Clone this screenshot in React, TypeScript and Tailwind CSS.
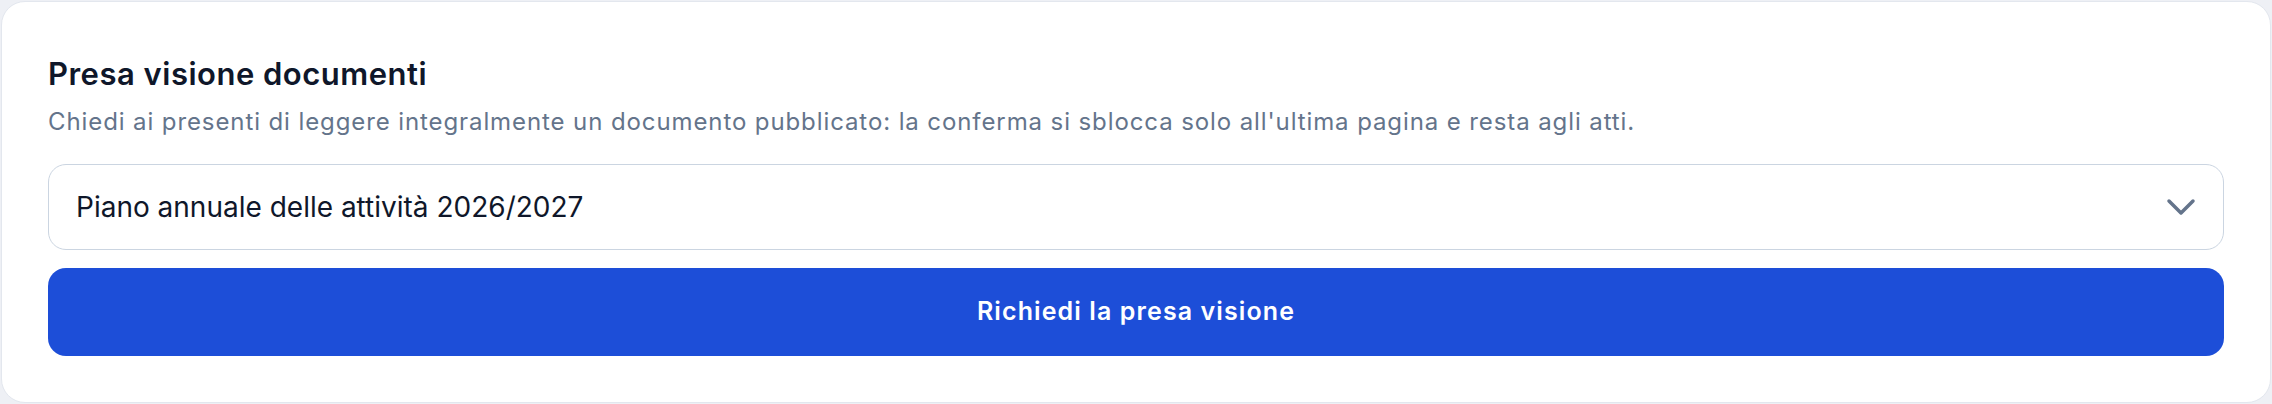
import { useState } from 'react'
import { ChevronDown } from 'lucide-react'

const documents = [
  'Piano annuale delle attività 2026/2027',
  'Regolamento di istituto',
  'Patto educativo di corresponsabilità',
]

export default function App() {
  const [selected] = useState(documents[0])

  return (
    <div className="min-h-screen bg-[#eef0f5] p-px" style={{ fontFamily: 'Inter, "Noto Sans", sans-serif' }}>
      <section className="rounded-[24px] border border-[#e3e7ee] bg-white px-[46px] pt-[54px] pb-[46px]">
        <h2 className="text-[31px] leading-[36px] font-semibold tracking-[0.5px] text-[#0f172a]">Presa visione documenti</h2>
        <p className="mt-[14px] text-[24px] leading-[32px] tracking-[0.9px] text-[#64748b]">
          Chiedi ai presenti di leggere integralmente un documento pubblicato: la conferma si sblocca solo all'ultima pagina e resta agli atti.
        </p>

        <button
          type="button"
          className="mt-[26px] flex h-[86px] w-full items-center justify-between rounded-[18px] border-[1.5px] border-[#cbd5e1] bg-white pl-[27px] pr-[18px] text-left"
        >
          <span className="text-[28px] text-[#0f172a]">{selected}</span>
          <ChevronDown size={48} strokeWidth={1.75} className="text-[#64748b]" />
        </button>

        <button
          type="button"
          className="mt-[18px] flex h-[88px] w-full items-center justify-center rounded-[18px] bg-[#1d4ed8] text-[25px] font-semibold tracking-[1.1px] text-white"
        >
          Richiedi la presa visione
        </button>
      </section>
    </div>
  )
}
